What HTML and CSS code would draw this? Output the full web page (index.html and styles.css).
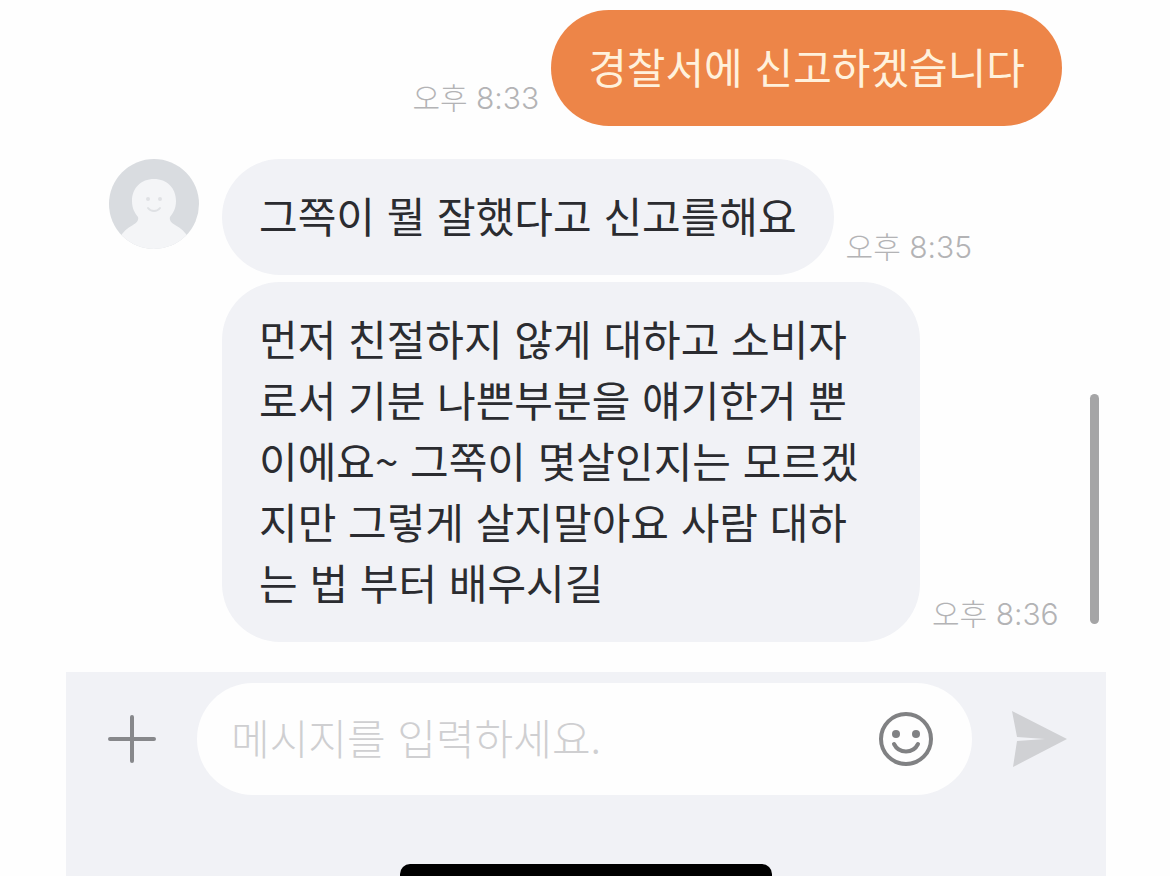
FILE: index.html
```
<!DOCTYPE html>
<html lang="ko">
  <head>
    <meta charset="UTF-8" />
    <meta name="viewport" content="width=device-width, initial-scale=1.0">
    <title>채팅</title>
    <link rel="stylesheet" href="styles.css">
  </head>
  <body>
    <div class="chat">
      <main class="messages">
        <div class="row mine">
          <time class="time">오후 8:33</time>
          <p class="bubble">경찰서에 신고하겠습니다</p>
        </div>

        <div class="group">
          <svg class="avatar" viewBox="0 0 90 90" aria-hidden="true">
            <clipPath id="circle"><circle cx="45" cy="45" r="45" /></clipPath>
            <g clip-path="url(#circle)">
              <rect width="90" height="90" fill="#d9dce0" />
              <path fill="#f4f5f7" d="M45 20c13 0 22 9 22 22 0 8-3 12-6 16-1 4 2 6 5 8 6 3 10 7 13 12v15H11V78c3-5 7-9 13-12 3-2 6-4 5-8-3-4-6-8-6-16 0-13 9-22 22-22z" />
              <circle cx="39" cy="40" r="2" fill="#dfe1e4" />
              <circle cx="51" cy="40" r="2" fill="#dfe1e4" />
              <path d="M39 49c3 4 9 4 12 0" fill="none" stroke="#dfe1e4" stroke-width="2" stroke-linecap="round" />
            </g>
          </svg>
          <div class="stack">
            <div class="row">
              <p class="bubble">그쪽이 뭘 잘했다고 신고를해요</p>
              <time class="time">오후 8:35</time>
            </div>
            <div class="row">
              <p class="bubble long">먼저 친절하지 않게 대하고 소비자<br>로서 기분 나쁜부분을 얘기한거 뿐<br>이에요~ 그쪽이 몇살인지는 모르겠<br>지만 그렇게 살지말아요 사람 대하<br>는 법 부터 배우시길</p>
              <time class="time">오후 8:36</time>
            </div>
          </div>
        </div>
        <div class="scrollbar"></div>
      </main>

      <footer class="composer">
        <form class="bar">
          <button type="button" class="icon-btn" aria-label="추가">
            <svg width="50" height="50" viewBox="0 0 50 50">
              <path d="M25 3v44M3 25h44" stroke="#87888b" stroke-width="4" stroke-linecap="round" />
            </svg>
          </button>
          <div class="field">
            <input type="text" placeholder="메시지를 입력하세요." aria-label="메시지">
            <button type="button" class="icon-btn" aria-label="이모티콘">
              <svg width="56" height="56" viewBox="0 0 56 56">
                <circle cx="28" cy="28" r="25" fill="none" stroke="#808183" stroke-width="4" />
                <circle cx="18" cy="23" r="4" fill="#808183" />
                <circle cx="38" cy="23" r="4" fill="#808183" />
                <path d="M16 33c5 10 19 10 24 0" fill="none" stroke="#808183" stroke-width="4" stroke-linecap="round" />
              </svg>
            </button>
          </div>
          <button type="submit" class="icon-btn" aria-label="보내기">
            <svg width="56" height="58" viewBox="0 0 56 58">
              <path d="M0 1L55 29 1 57 5 31l28-2-28-2z" fill="#d0d1d4" />
            </svg>
          </button>
        </form>
        <div class="home"></div>
      </footer>
    </div>
  </body>
</html>
```
FILE: styles.css
```
* {
  box-sizing: border-box;
}

body {
  margin: 0;
  background: #fefefe;
  color: #2b2c30;
  font-family: "Noto Sans CJK KR", sans-serif;
  font-size: 42px;
  line-height: 61px;
}

.chat {
  display: flex;
  flex-direction: column;
  min-height: 100vh;
  margin: 0 64px 0 66px;
}

.messages {
  position: relative;
  padding: 10px 44px 30px 43px;
}

.row {
  display: flex;
  align-items: flex-end;
  gap: 12px;
}

.mine {
  justify-content: flex-end;
  margin-bottom: 33px;
}

.group {
  display: flex;
  align-items: flex-start;
  gap: 23px;
}

.stack {
  display: flex;
  flex: 1;
  flex-direction: column;
  gap: 7px;
}

.avatar {
  flex: none;
  width: 90px;
  height: 90px;
}

.bubble {
  margin: 0;
  padding: 25px 37px 30px;
  border-radius: 58px;
  background: #f1f2f6;
}

.long {
  width: 698px;
}

.mine .bubble {
  background: #ed8548;
  color: #fff1dc;
}

.time {
  flex: none;
  margin-bottom: 10px;
  color: #b3b3b5;
  font-family: Inter, "Noto Sans CJK KR", sans-serif;
  font-size: 30px;
  font-weight: 300;
  line-height: 36px;
  white-space: nowrap;
}

.scrollbar {
  position: absolute;
  right: 7px;
  bottom: 48px;
  width: 9px;
  height: 230px;
  border-radius: 5px;
  background: #a5a5a6;
}

.composer {
  display: flex;
  flex: 1;
  flex-direction: column;
  min-height: 204px;
  padding-top: 11px;
  background: #f1f2f6;
}

.bar {
  display: flex;
  align-items: center;
  gap: 40px;
  padding: 0 38px 0 41px;
}

.field {
  display: flex;
  flex: 1;
  align-items: center;
  height: 112px;
  padding: 0 38px 0 34px;
  border-radius: 56px;
  background: #fefefe;
}

.field input {
  flex: 1;
  min-width: 0;
  padding: 0 0 6px;
  border: 0;
  outline: 0;
  background: none;
  color: #2b2c30;
  font: inherit;
}

.field input::placeholder {
  color: #cfcfd1;
  font-weight: 300;
  opacity: 1;
}

.icon-btn {
  display: flex;
  padding: 0;
  border: 0;
  background: none;
  cursor: pointer;
}

/* home indicator runs off the bottom edge */
.home {
  width: 372px;
  height: 12px;
  margin: auto auto 0;
  border-radius: 10px 10px 0 0;
  background: #000;
}
```
